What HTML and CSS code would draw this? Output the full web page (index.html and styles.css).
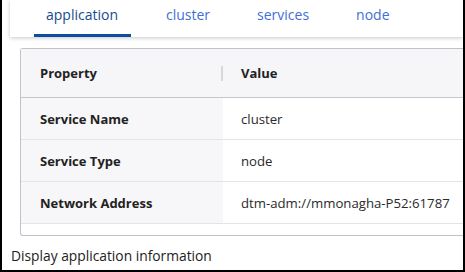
FILE: index.html
```html
<!DOCTYPE html>
<html>
<head>
<meta charset="utf-8">
<link rel="stylesheet" href="styles.css">
</head>
<body>
<div class="frame">
  <nav class="tabs">
    <span class="tab active">application</span>
    <span class="tab">cluster</span>
    <span class="tab">services</span>
    <span class="tab">node</span>
  </nav>
  <div class="card">
    <div class="row head">
      <div class="cell key">Property<span class="sep"></span></div>
      <div class="cell val">Value</div>
    </div>
    <div class="row">
      <div class="cell key">Service Name</div>
      <div class="cell val">cluster</div>
    </div>
    <div class="row">
      <div class="cell key">Service Type</div>
      <div class="cell val">node</div>
    </div>
    <div class="row">
      <div class="cell key">Network Address</div>
      <div class="cell val">dtm-adm://mmonagha-P52:61787</div>
    </div>
    <div class="card-foot"></div>
  </div>
  <p class="desc">Display application information</p>
</div>
</body>
</html>
```
FILE: styles.css
```css
html, body {
  margin: 0;
  padding: 0;
  background: #fff;
}
body {
  font-family: "Open Sans", "Noto Sans", sans-serif;
  color: #222;
}
.frame {
  box-sizing: border-box;
  width: 465px;
  height: 272px;
  border: 2px solid #000;
  border-top: none;
  overflow: hidden;
  display: flex;
  flex-direction: column;
}
.tabs {
  margin-left: 8px;
  height: 37px;
  flex: none;
  background: #fff;
  box-shadow: 0 1px 4px rgba(0,0,0,0.22);
  display: flex;
  gap: 23px;
  padding-left: 24px;
}
.tab {
  box-sizing: border-box;
  height: 37px;
  padding: 5px 12px 0;
  font-size: 14px;
  color: #3f6fd8;
  border-bottom: 3px solid transparent;
  white-space: nowrap;
}
.tab.active {
  color: #174a90;
  border-bottom-color: #0d4ea0;
  padding: 5px 13px 0 12px;
}
.card {
  margin: 11px 0 0 18px;
  width: 470px;
  flex: none;
  border: 1px solid #bfc2cc;
  border-right: none;
  border-radius: 3px 0 0 3px;
  background: #fff;
}
.row {
  display: flex;
  height: 41px;
  border-bottom: 1px solid #e2e4ea;
  font-size: 13px;
}
.row.head {
  height: 48px;
  background: #f6f6f8;
  border-bottom: 1px solid #c4c6d0;
}
.cell {
  display: flex;
  align-items: center;
  box-sizing: border-box;
}
.key {
  width: 202px;
  padding-left: 19px;
  background: #f7f7f9;
  font-weight: 700;
  position: relative;
}
.head .key {
  background: transparent;
}
.val {
  padding-left: 18px;
  color: #2a2a2a;
  font-size: 13.2px;
}
.head .val {
  font-weight: 700;
  color: #222;
  font-size: 13px;
}
.sep {
  position: absolute;
  right: 0;
  top: 17px;
  width: 2px;
  height: 15px;
  background: #d6d8de;
}
.card-foot {
  height: 11px;
}
.desc {
  margin: 10px 0 0 9px;
  font-size: 13.8px;
  color: #222;
}
```
